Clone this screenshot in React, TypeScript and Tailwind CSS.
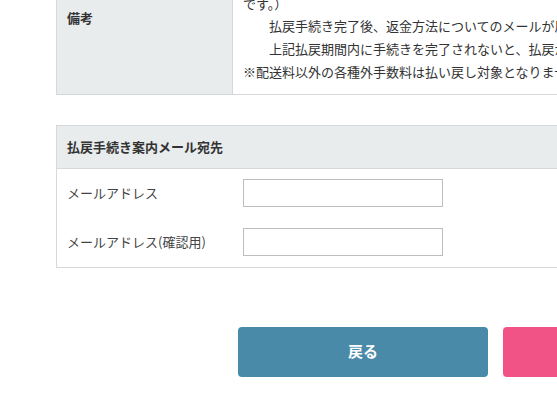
const noteLines = [
  "※払戻期間：2024年2月1日（木）10:00 〜 2024年2月29日（木）23:59",
  "（払戻手続きには、ご購入時のメールアドレスと受付番号が必要",
  "です。）",
  "　　払戻手続き完了後、返金方法についてのメールが届きますので、内容をご確認ください。",
  "　　上記払戻期間内に手続きを完了されないと、払戻ができなくなりますのでご注意ください。",
  "※配送料以外の各種外手数料は払い戻し対象となりません。",
];

function EmailRow({ label }: { label: string }) {
  return (
    <div className="flex h-[49px] items-center">
      <div className="w-[176px] px-[10px] text-[13px] text-[#444]">{label}</div>
      <div className="px-[10px]">
        <input
          type="text"
          className="block h-[28px] w-[200px] border border-[#bdbdbd] bg-white px-2 text-[13px] outline-none"
        />
      </div>
    </div>
  );
}

export default function App() {
  return (
    <div className="h-[396px] w-[557px] overflow-hidden bg-white font-['Noto_Sans_CJK_JP','Liberation_Sans',sans-serif] text-[#333]">
      <div className="-mt-[64px] ml-[56px] w-[879px]">
        {/* notes table */}
        <div className="flex border border-[#d6d9db]">
          <div className="flex w-[176px] shrink-0 items-center border-r border-[#d6d9db] bg-[#e9eced] px-[10px] pt-[4px] text-[13px] font-bold">
            備考
          </div>
          <div className="flex-1 px-[10px] py-[10px] text-[13px] leading-[22.75px]">
            {noteLines.map((line, i) => (
              <div key={i} className="whitespace-nowrap">
                {line}
              </div>
            ))}
          </div>
        </div>

        {/* refund mail address */}
        <div className="mt-[30px] border border-[#d6d9db]">
          <div className="flex h-[43px] items-center border-b border-[#d6d9db] bg-[#e9eced] px-[10px] text-[13px] font-bold">
            払戻手続き案内メール宛先
          </div>
          <EmailRow label="メールアドレス" />
          <EmailRow label="メールアドレス(確認用)" />
        </div>

        {/* buttons */}
        <div className="mt-[59px] flex justify-center gap-[15px]">
          <button className="h-[50px] w-[250px] rounded-[4px] bg-[#4a8aa9] text-[15px] font-bold text-white">
            戻る
          </button>
          <button className="h-[50px] w-[250px] rounded-[4px] bg-[#f25387] text-[15px] font-bold text-white">
            払戻手続きへ
          </button>
        </div>
      </div>
    </div>
  );
}
